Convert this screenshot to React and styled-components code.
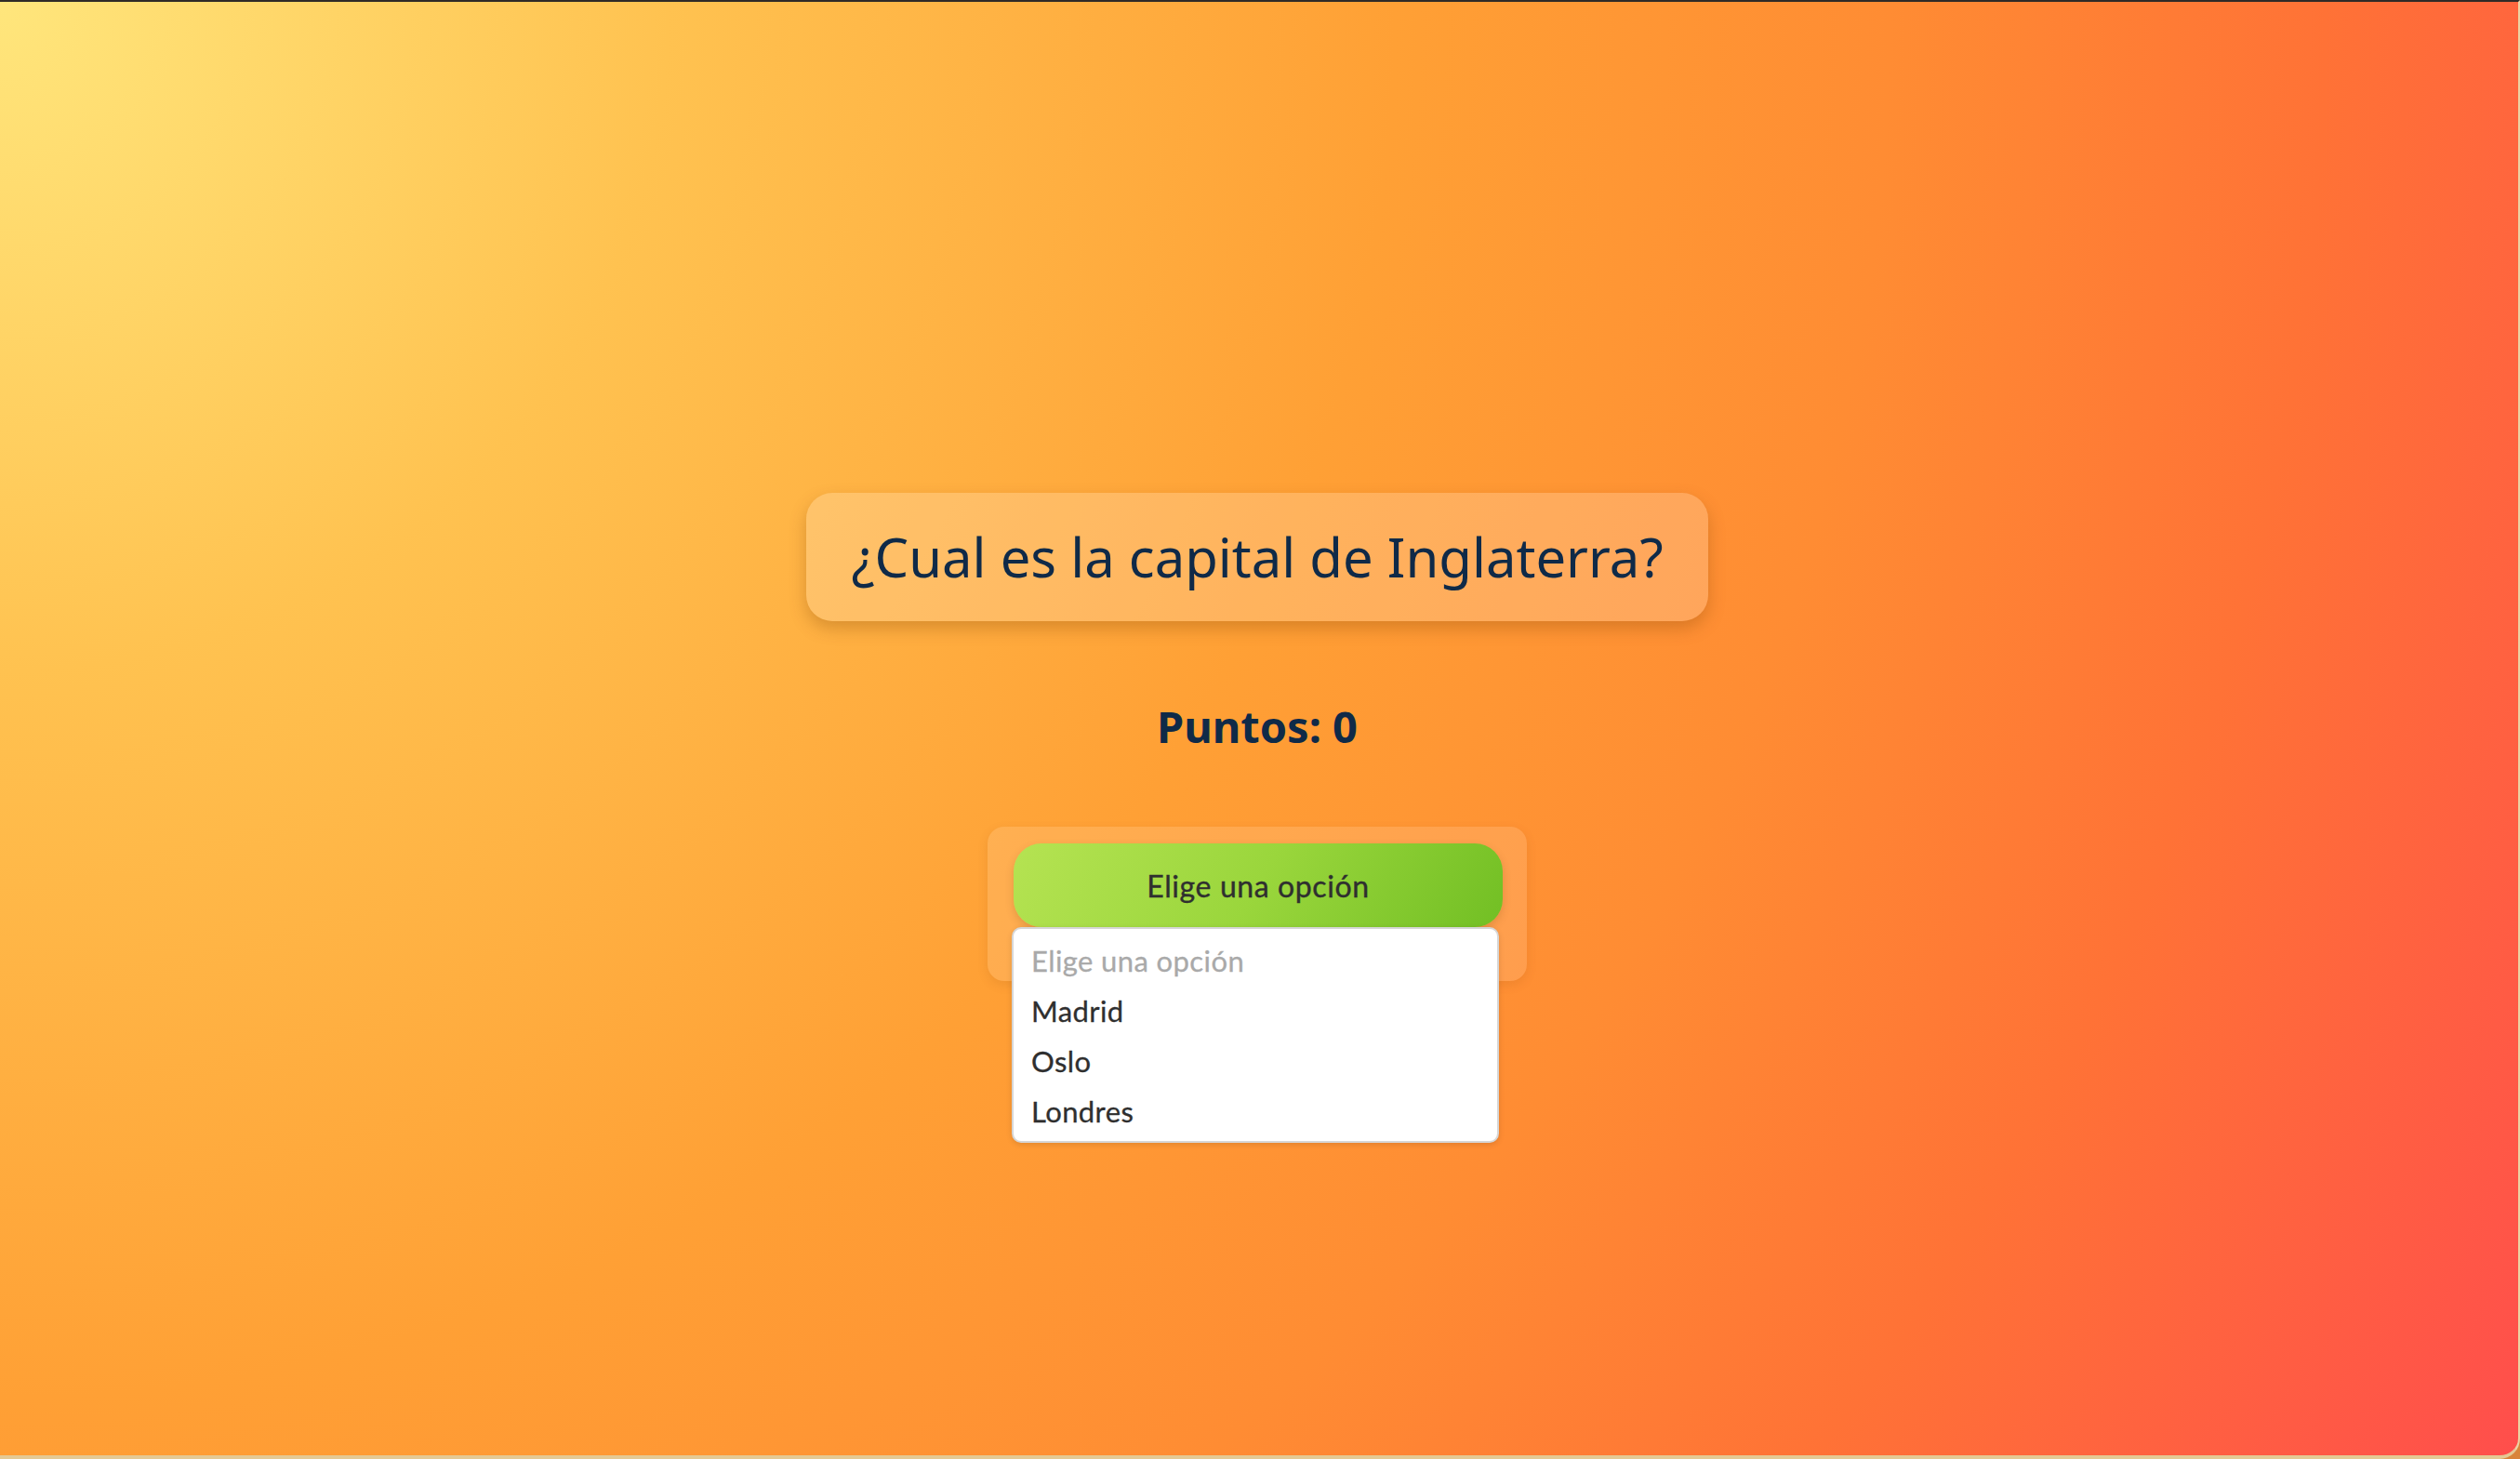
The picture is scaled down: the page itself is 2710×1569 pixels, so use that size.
import React from 'react';
import styled, { createGlobalStyle } from 'styled-components';

const colors = {
  ink: '#0f2a48',
  text: '#2f2f2f',
  muted: '#a9a9a9',
};

const GlobalStyle = createGlobalStyle`
  html, body {
    margin: 0;
    padding: 0;
    background: #d9843a;
  }
  * { box-sizing: border-box; }
`;

const Frame = styled.div`
  min-height: 100vh;
  display: flex;
  flex-direction: column;
  align-items: center;
  justify-content: center;
  padding: 18px 4px 0 0;
  border-top: 2px solid #2f2a27;
  border-right: 2px solid #ecd3a4;
  border-bottom: 4px solid #e4c994;
  border-bottom-right-radius: 22px;
  background: radial-gradient(
    circle at top left,
    #ffe67c 0%,
    #ffc250 23%,
    #ffa035 48%,
    #ff8c33 65%,
    #ff7236 80%,
    #ff4e4c 100%
  );
`;

const QuestionCard = styled.div`
  padding: 29px 48px;
  border-radius: 28px;
  background: rgba(255, 255, 255, 0.2);
  box-shadow: 0 8px 18px rgba(120, 60, 0, 0.28);
`;

const Question = styled.h1`
  margin: 0;
  font-family: "Noto Sans", "Open Sans", sans-serif;
  font-weight: 400;
  font-size: 58px;
  line-height: 80px;
  color: ${colors.ink};
  white-space: nowrap;
`;

const Score = styled.h2`
  margin: 81px 0 76px;
  font-family: "Noto Sans", "Open Sans", sans-serif;
  font-weight: 700;
  font-size: 47px;
  line-height: 64px;
  color: ${colors.ink};
`;

const Panel = styled.div`
  width: 580px;
  padding: 18px 26px 58px 28px;
  border-radius: 18px;
  background: rgba(255, 255, 255, 0.13);
  box-shadow: 0 4px 12px rgba(120, 60, 0, 0.12);
`;

const SelectWrap = styled.div`
  position: relative;
`;

const SelectButton = styled.div`
  height: 90px;
  display: flex;
  align-items: center;
  justify-content: center;
  border-radius: 30px;
  background: linear-gradient(120deg, #b5e352 0%, #9ad63c 50%, #72bf24 100%);
  box-shadow: 0 4px 10px rgba(90, 60, 0, 0.18);
  font-family: Lato, "Open Sans", sans-serif;
  font-size: 32px;
  letter-spacing: 0.6px;
  -webkit-text-stroke: 0.4px ${colors.text};
  color: ${colors.text};
`;

const OptionList = styled.ul`
  position: absolute;
  left: -2px;
  top: 90px;
  width: 524px;
  margin: 0;
  padding: 7px 0 5px;
  list-style: none;
  background: #fff;
  border: 2px solid #d6d6d6;
  border-radius: 10px;
  box-shadow: 0 2px 6px rgba(0, 0, 0, 0.12);
`;

const Option = styled.li`
  height: 54px;
  display: flex;
  align-items: center;
  padding: 0 19px;
  font-family: Lato, "Open Sans", sans-serif;
  font-size: 31px;
  letter-spacing: 0.4px;
  -webkit-text-stroke: 0.3px ${({ $placeholder }) => ($placeholder ? colors.muted : colors.text)};
  color: ${({ $placeholder }) => ($placeholder ? colors.muted : colors.text)};
`;

const options = ['Madrid', 'Oslo', 'Londres'];

export default function App() {
  return (
    <>
      <GlobalStyle />
      <Frame>
        <QuestionCard>
          <Question>¿Cual es la capital de Inglaterra?</Question>
        </QuestionCard>
        <Score>Puntos: 0</Score>
        <Panel>
          <SelectWrap>
            <SelectButton>Elige una opción</SelectButton>
            <OptionList>
              <Option $placeholder>Elige una opción</Option>
              {options.map((o) => (
                <Option key={o}>{o}</Option>
              ))}
            </OptionList>
          </SelectWrap>
        </Panel>
      </Frame>
    </>
  );
}
